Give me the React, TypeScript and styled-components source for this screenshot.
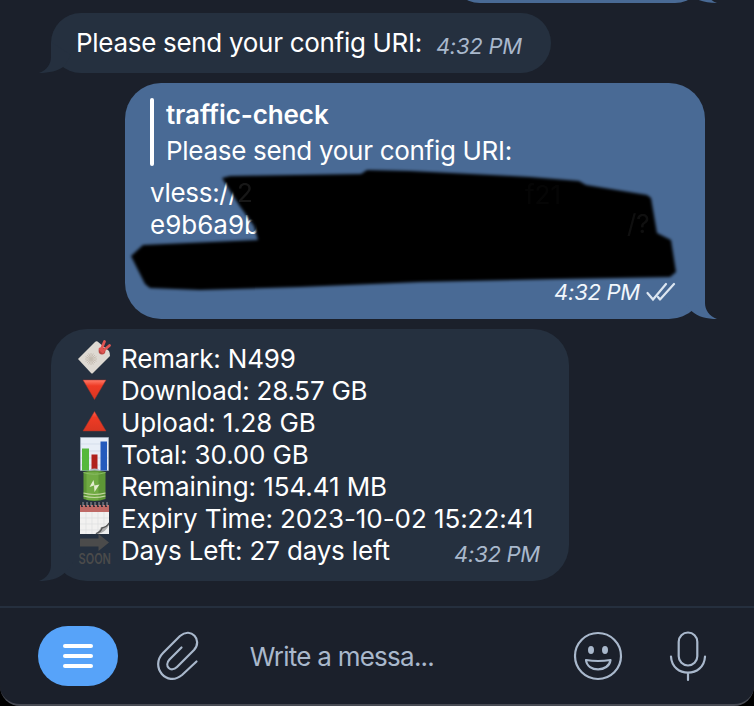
import React from "react";
import styled, { createGlobalStyle, css } from "styled-components";

const colors = {
  backdrop: "#1b202b",
  incoming: "#25303f",
  outgoing: "#496a95",
  muted: "#a9b8cc",
  accent: "#57a3f9",
};

const GlobalStyle = createGlobalStyle`
  * { box-sizing: border-box; }
  body {
    margin: 0;
    background: #000;
    font-family: Inter, "Liberation Sans", sans-serif;
    font-size: 26px;
    font-weight: 370;
    color: #fff;
    overflow: hidden;
  }
`;

const Window = styled.main`
  width: 754px;
  height: 706px;
  display: flex;
  flex-direction: column;
  background: ${colors.backdrop};
  border-bottom: 2px solid #474a53;
  border-radius: 0 0 20px 20px;
  overflow: hidden;
`;

const Conversation = styled.section`
  height: 606px;
  padding: 0 49px 25px 51px;
  display: flex;
  flex-direction: column;
  justify-content: flex-end;
  gap: 10px;
  overflow: hidden;
`;

const Bubble = styled.article<{ $own?: boolean; $width: number; $height: number }>`
  position: relative;
  flex: none;
  width: ${(p) => p.$width}px;
  height: ${(p) => p.$height}px;
  align-self: ${(p) => (p.$own ? "flex-end" : "flex-start")};
  background: ${(p) => (p.$own ? colors.outgoing : colors.incoming)};
  border-radius: ${(p) => Math.min(36, p.$height / 2)}px;
  padding: 14px 25px;
`;

const TailShape = styled.svg<{ $own?: boolean }>`
  position: absolute;
  bottom: 0;
  width: 44px;
  height: 36px;
  ${(p) =>
    p.$own
      ? css`
          right: -12px;
          fill: ${colors.outgoing};
        `
      : css`
          left: -12px;
          transform: scaleX(-1);
          fill: ${colors.incoming};
        `}
`;

const Tail = ({ own, short }: { own?: boolean; short?: boolean }) => (
  <TailShape $own={own} viewBox="0 0 44 36">
    <path d={short ? "M32 5V20C32 27 36 33 44 36C34 36 25 34 18.5 29L12 18Z" : "M32 0V20C32 27 36 33 44 36C34 36 25 34 18.5 28L10 18L24 0Z"} />
  </TailShape>
);

const InlineMessage = styled.div`
  display: flex;
  align-items: flex-start;
  line-height: 32px;
  gap: 14px;
`;

const Body = styled.span<{ $tracking?: number }>`
  letter-spacing: ${(p) => p.$tracking ?? -0.3}px;
  white-space: nowrap;
`;

const Time = styled.time<{ $own?: boolean }>`
  font-size: 22px;
  font-style: italic;
  line-height: 28px;
  letter-spacing: -0.25px;
  white-space: nowrap;
  color: ${(p) => (p.$own ? "#f1f6fc" : colors.muted)};
`;

const InlineTime = styled(Time)`
  margin-top: 5px;
`;

const Quote = styled.blockquote`
  margin: 0;
  display: flex;
  gap: 12px;
  height: 70px;
`;

const QuoteBar = styled.span`
  width: 4px;
  height: 68px;
  margin-top: 1px;
  border-radius: 2px;
  background: #fff;
`;

const QuoteLines = styled.div`
  display: flex;
  flex-direction: column;
  line-height: 36px;
`;

const QuoteName = styled.span`
  font-weight: 560;
  letter-spacing: -0.1px;
  white-space: nowrap;
`;

const Link = styled.p`
  margin: 10px 0 0;
  display: flex;
  flex-direction: column;
  line-height: 32px;
`;

const Scribble = styled.svg`
  position: absolute;
  left: 0;
  top: 80px;
  width: 580px;
  height: 140px;
`;

const Receipt = styled.footer`
  position: absolute;
  right: 29px;
  bottom: 13px;
  display: flex;
  align-items: center;
  gap: 6px;
`;

const Stats = styled.ul`
  list-style: none;
  margin: 0;
  padding: 0;
`;

const Stat = styled.li`
  display: flex;
  height: 32px;
  line-height: 32px;
  gap: 9px;
`;

const Emoji = styled.svg`
  width: 36px;
  height: 36px;
  margin-top: -4px;
  flex: none;
  overflow: visible;
`;

const CornerTime = styled(Time)`
  position: absolute;
  right: 29px;
  bottom: 13px;
`;

const Composer = styled.footer`
  height: 98px;
  border-top: 2px solid #252f3e;
  padding: 0 47px 0 38px;
  display: flex;
  align-items: center;
`;

const MenuButton = styled.button`
  width: 80px;
  height: 60px;
  padding: 0;
  border: 0;
  border-radius: 30px;
  background: ${colors.accent};
  display: flex;
  flex-direction: column;
  align-items: center;
  justify-content: center;
  gap: 6px;
`;

const MenuLine = styled.span`
  width: 30px;
  height: 4px;
  border-radius: 2px;
  background: #fff;
`;

const Placeholder = styled.div`
  width: 323px;
  padding: 2px 0 0 49px;
  color: ${colors.muted};
  line-height: 32px;
  letter-spacing: -0.75px;
`;

const ToolIcon = styled.svg<{ $w: number; $gap?: number }>`
  width: ${(p) => p.$w}px;
  height: 52px;
  margin-left: ${(p) => p.$gap ?? 0}px;
  flex: none;
  fill: none;
  stroke: ${colors.muted};
  stroke-width: 2.2;
  stroke-linecap: round;
  stroke-linejoin: round;
`;

const TagEmoji = () => (
  <Emoji viewBox="0 0 36 36">
    <path d="M2 20L19 3Q20 2 21.5 2.5L33 12Q34 14 34 17L17 34Q16 35 15 34Z" fill="#ded9d2" />
    <g stroke="#c4bbb0" strokeWidth=".9">
      <path d="M15 14v12M9 20h12M11 16l8 8M19 16l-8 8M12.7 14.5l4.6 11M17.3 14.5l-4.6 11M9.5 17.7l11 4.6M20.5 17.7l-11 4.6" />
    </g>
    <circle cx="26" cy="12" r="3.4" fill="#b6443f" />
    <path d="M25 11L28.5 2.5M27 12L33.5 6.5M24 10L27 13" stroke="#e05552" strokeWidth="2.8" strokeLinecap="round" />
  </Emoji>
);

const TriangleEmoji = ({ up }: { up?: boolean }) => (
  <Emoji viewBox="0 0 36 36">
    <defs>
      <linearGradient id={up ? "redUp" : "redDown"} x1="0" y1="0" x2="0" y2="1">
        <stop offset="0" stopColor={up ? "#ff6350" : "#ff7c69"} />
        <stop offset=".3" stopColor="#ef3b25" />
        <stop offset="1" stopColor="#d93622" />
      </linearGradient>
    </defs>
    <path
      d={up ? "M18.5 8.5L30 28H7Z" : "M7 9H30L18.5 28.5Z"}
      fill={`url(#${up ? "redUp" : "redDown"})`}
      stroke="#a53228"
      strokeWidth=".5"
      strokeLinejoin="round"
    />
  </Emoji>
);

const ChartEmoji = () => (
  <Emoji viewBox="0 0 36 36">
    <path d="M4.5 2.5H32.5V35.5H4.5Z" fill="#e8eef7" stroke="#a5afbd" strokeWidth=".8" />
    <path d="M5 9H32M5 16H32M5 23H32M5 30H32" stroke="#cdd7e5" strokeWidth=".7" />
    <path d="M6 13.5h7v22H6z" fill="#55b83c" />
    <path d="M15.5 19.5h6v16h-6z" fill="#b0211d" />
    <path d="M24.5 6.5h6.5v29h-6.5z" fill="#245abc" />
  </Emoji>
);

const BatteryEmoji = () => (
  <Emoji viewBox="0 0 36 36">
    <ellipse cx="18.5" cy="4" rx="5.5" ry="2.4" fill="#aebbc5" />
    <path d="M7.5 5Q18.5 2 29.5 5V32Q18.5 36 7.5 32Z" fill="#5e9736" />
    <path d="M10.5 5h12v28h-12z" fill="#79b34b" opacity=".65" />
    <path d="M7.5 5.5Q18.5 9 29.5 5.5" fill="none" stroke="#8abc65" />
    <path d="M7.5 26Q18.5 29 29.5 26M7.5 29Q18.5 32 29.5 29" fill="none" stroke="#c3d6a1" strokeWidth="1.2" />
    <path d="M17.5 13L13.5 20L18 18.5L18.5 25L23.5 17.5L18.5 18.5Z" fill="#e3eccf" />
  </Emoji>
);

const CalendarEmoji = () => (
  <Emoji viewBox="0 0 36 36">
    <path d="M4 6H33V35H4Z" fill="#f2f1f0" />
    <path d="M4 6H33V13H4Z" fill="#bf6965" />
    <path d="M4 19H33M4 25H33M4 31H33M10 13V35M16 13V35M22 13V35M28 13V35" stroke="#dededf" strokeWidth=".7" />
    <path d="M19 35Q23 33 25 28Q31 28 33 23V35Z" fill="#adadad" />
    <path d="M22 35Q30 33 33 26V35Z" fill="#eee" />
    <path d="M20 34.5Q25 33 26 29Q31 28 33 24" fill="none" stroke="#555" strokeWidth="1.3" />
    <path d="M6 3v5M10 3v5M14 3v5M18 3v5M22 3v5M26 3v5M30 3v5" stroke="#252831" strokeWidth="1.8" />
    <path d="M7 3v4M11 3v4M15 3v4M19 3v4M23 3v4M27 3v4M31 3v4" stroke="#b6b7bc" strokeWidth=".8" />
  </Emoji>
);

const SoonEmoji = () => (
  <Emoji viewBox="0 0 36 36">
    <path d="M4 7.5H22.5V3L33 11.5L22.5 20V15.5H4Z" fill="#4b4b4b" />
    <text x="2.5" y="32.5" fontSize="14" textLength="32.5" lengthAdjust="spacingAndGlyphs" fontWeight="600" fill="#4b4b4b">
      SOON
    </text>
  </Emoji>
);

const stats: { icon: React.ReactNode; label: string; tracking: number }[] = [
  { icon: <TagEmoji />, label: "Remark: N499", tracking: -0.17 },
  { icon: <TriangleEmoji />, label: "Download: 28.57 GB", tracking: -0.24 },
  { icon: <TriangleEmoji up />, label: "Upload: 1.28 GB", tracking: -0.12 },
  { icon: <ChartEmoji />, label: "Total: 30.00 GB", tracking: -0.15 },
  { icon: <BatteryEmoji />, label: "Remaining: 154.41 MB", tracking: -0.07 },
  { icon: <CalendarEmoji />, label: "Expiry Time: 2023-10-02 15:22:41", tracking: -0.07 },
  { icon: <SoonEmoji />, label: "Days Left: 27 days left", tracking: -0.18 },
];

export default function App() {
  return (
    <>
      <GlobalStyle />
      <Window>
        <Conversation>
          <Bubble $own $width={255} $height={60}>
            <Tail own short />
          </Bubble>
          <Bubble $width={500} $height={60}>
            <Tail short />
            <InlineMessage>
              <Body>Please send your config URI:</Body>
              <InlineTime>4:32 PM</InlineTime>
            </InlineMessage>
          </Bubble>
          <Bubble $own $width={580} $height={236}>
            <Tail own />
            <Quote>
              <QuoteBar />
              <QuoteLines>
                <QuoteName>traffic-check</QuoteName>
                <Body>Please send your config URI:</Body>
              </QuoteLines>
            </Quote>
            <Link>
              <Body>vless://</Body>
              <Body $tracking={0}>e9b6a9b</Body>
            </Link>
            <Scribble viewBox="125 163 580 140">
              <defs>
                <filter id="soft" x="-5%" y="-10%" width="110%" height="120%">
                  <feGaussianBlur stdDeviation="1.8" />
                </filter>
              </defs>
              <path
                filter="url(#soft)"
                d="M222 178L230 176L361 174L367 170L410 171L530 177L579 181L586 185L647 195L651 198L657 233L671 240L676 272L670 277L560 279L420 282L300 287L200 290L150 288L145 284L131 256L143 245L258 240L254 226L239 205Z"
              />
              <g fill="#fff" fontSize="26">
                <text x="237" y="202" opacity=".09">2</text>
                <text x="525" y="204" opacity=".02">f21</text>
                <text x="627" y="233" opacity=".06">/?</text>
              </g>
            </Scribble>
            <Receipt>
              <Time $own>4:32 PM</Time>
              <svg width="30" height="20" viewBox="0 0 30 20" fill="none" stroke="#dce6f1" strokeWidth="2.2" strokeLinecap="round">
                <path d="M1.5 11L7 17.5L20 2M14 17.5L28 2M12 15L14 17.5" />
              </svg>
            </Receipt>
          </Bubble>
          <Bubble $width={518} $height={252}>
            <Tail />
            <Stats>
              {stats.map(({ icon, label, tracking }) => (
                <Stat key={label}>
                  {icon}
                  <Body $tracking={tracking}>{label}</Body>
                </Stat>
              ))}
            </Stats>
            <CornerTime>4:32 PM</CornerTime>
          </Bubble>
        </Conversation>
        <Composer>
          <MenuButton aria-label="Menu">
            <MenuLine />
            <MenuLine />
            <MenuLine />
          </MenuButton>
          <ToolIcon $w={44} $gap={39} viewBox="157 630 44 52">
            <path d="M181.5 647.5L169.5 659.5C163.5 666 171 673 177 667L194 650C203 640 191 626.5 180 636L163 653C149.5 667 167 687.5 182 675L196.5 661.5" />
          </ToolIcon>
          <Placeholder>Write a messa...</Placeholder>
          <ToolIcon $w={50} $gap={50} viewBox="573 630 50 52">
            <circle cx="598" cy="656" r="23" />
            <path d="M586 660Q598 662 610.5 660C609 672.5 587 672.5 586 660Z" />
            <g fill={colors.muted} stroke="none">
              <ellipse cx="591" cy="650" rx="3" ry="4" />
              <ellipse cx="605" cy="650" rx="3" ry="4" />
            </g>
          </ToolIcon>
          <ToolIcon $w={38} $gap={46} viewBox="669 630 38 52">
            <rect x="678.7" y="632.5" width="18.6" height="33" rx="9.3" />
            <path d="M671 656.5C672 678 704 678 705 656.5M688 673V680" />
          </ToolIcon>
        </Composer>
      </Window>
    </>
  );
}
